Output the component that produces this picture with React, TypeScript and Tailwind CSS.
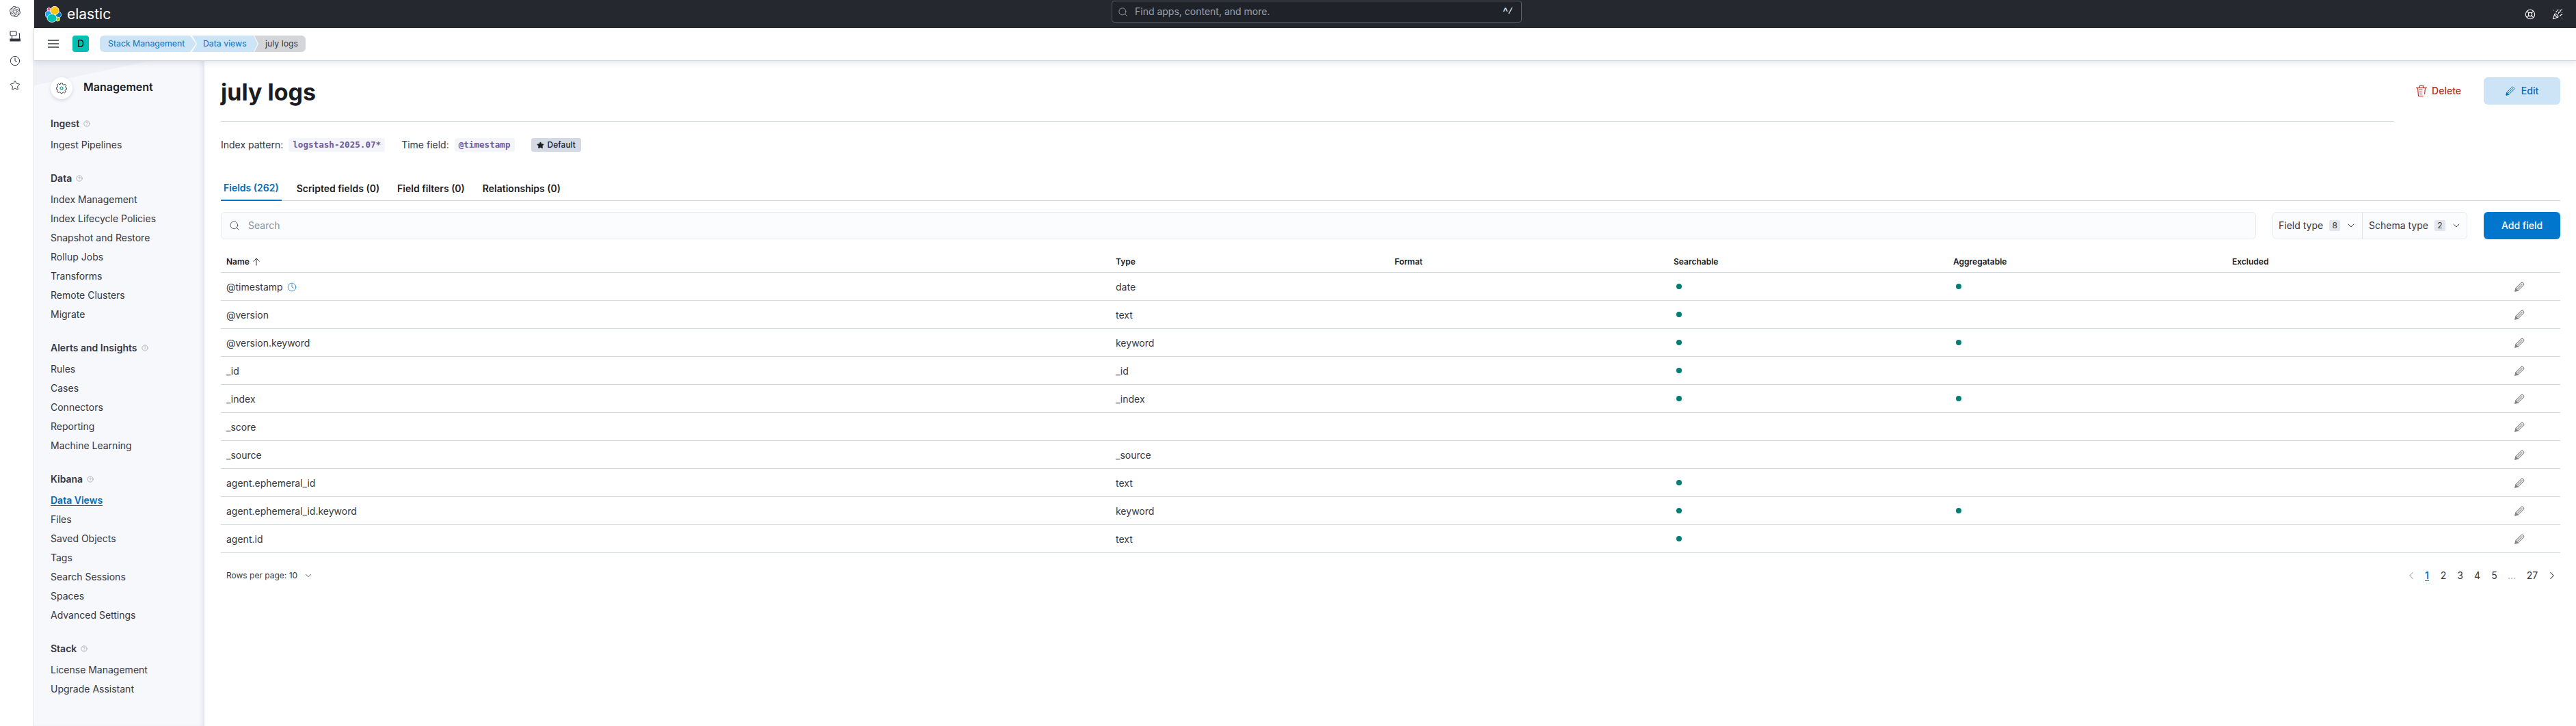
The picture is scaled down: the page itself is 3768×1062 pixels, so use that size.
import { ChevronDown, ChevronLeft, ChevronRight, CircleHelp, Clock, LifeBuoy, PartyPopper, Search, Star } from "lucide-react";
import { SiOpenai } from "react-icons/si";

const navSections = [
  { title: "Ingest", items: ["Ingest Pipelines"] },
  {
    title: "Data",
    items: ["Index Management", "Index Lifecycle Policies", "Snapshot and Restore", "Rollup Jobs", "Transforms", "Remote Clusters", "Migrate"],
  },
  { title: "Alerts and Insights", items: ["Rules", "Cases", "Connectors", "Reporting", "Machine Learning"] },
  { title: "Kibana", items: ["Data Views", "Files", "Saved Objects", "Tags", "Search Sessions", "Spaces", "Advanced Settings"] },
  { title: "Stack", items: ["License Management", "Upgrade Assistant"] },
];

const fields = [
  { name: "@timestamp", type: "date", searchable: true, aggregatable: true, timeField: true },
  { name: "@version", type: "text", searchable: true, aggregatable: false },
  { name: "@version.keyword", type: "keyword", searchable: true, aggregatable: true },
  { name: "_id", type: "_id", searchable: true, aggregatable: false },
  { name: "_index", type: "_index", searchable: true, aggregatable: true },
  { name: "_score", type: "", searchable: false, aggregatable: false },
  { name: "_source", type: "_source", searchable: false, aggregatable: false },
  { name: "agent.ephemeral_id", type: "text", searchable: true, aggregatable: false },
  { name: "agent.ephemeral_id.keyword", type: "keyword", searchable: true, aggregatable: true },
  { name: "agent.id", type: "text", searchable: true, aggregatable: false },
];

function PencilIcon({ className }: { className?: string }) {
  return (
    <svg viewBox="0 0 16 16" fill="none" stroke="currentColor" strokeWidth="1.1" className={className}>
      <path d="M1 15 L2 10.5 L10.8 1.7 a1.6 1.6 0 0 1 2.2 0 L14.3 3 a1.6 1.6 0 0 1 0 2.2 L5.5 14 Z" />
      <path d="M4.2 11.8 L12.2 3.8" />
      <path d="M1 15 L2 10.8 L5.2 14 Z" fill="currentColor" />
    </svg>
  );
}

function TrashIcon({ className }: { className?: string }) {
  return (
    <svg viewBox="0 0 16 16" fill="none" stroke="currentColor" strokeWidth="1.1" className={className}>
      <path d="M0 3.5 H16 M5.5 3.5 V0.5 H10.5 V3.5 M2.5 3.5 L3.5 15.5 H10.5 M13.5 3.5 L12.5 13 M4 6.5 H9.5 M4.5 9.5 H8.5 M5 12.5 H9" />
    </svg>
  );
}

function ElasticLogo() {
  return (
    <svg viewBox="0 0 24 24" className="h-6 w-6">
      <g stroke="#fff" strokeWidth="0.8">
        <circle cx="5.5" cy="5" r="2.6" fill="#f04e98" />
        <ellipse cx="5" cy="12" rx="5" ry="5.2" fill="#1ba9f5" />
        <ellipse cx="19.5" cy="12.5" rx="4" ry="4.5" fill="#0077cc" />
        <circle cx="18.5" cy="19" r="3" fill="#93c90e" />
        <circle cx="14" cy="6.5" r="6.2" fill="#fec514" />
        <ellipse cx="10" cy="17.5" rx="7" ry="6" fill="#00bfb3" />
      </g>
    </svg>
  );
}

function DeviceIcon() {
  return (
    <svg viewBox="0 0 16 16" fill="none" stroke="#343741" strokeWidth="1.2" className="h-4 w-4">
      <rect x="1" y="1" width="9" height="6" rx="1" />
      <path d="M3.5 7 V12.5 M13.5 4 H14.5 V12.5" />
      <path d="M1 12 H15.5 V15 H1 Z" fill="#343741" />
    </svg>
  );
}

function GearIcon() {
  return (
    <svg viewBox="0 0 16 16" fill="none" stroke="#343741" strokeWidth="0.9" className="h-4 w-4">
      <path d="M6.7 0.6 H9.3 L9.8 2.6 L11.5 3.3 L13.2 2.2 L14.9 4.2 L13.6 5.8 L14.2 7.3 L15.6 7.6 V9.6 L13.9 10 L13.2 11.6 L14.2 13.3 L12.4 15 L10.8 13.8 L9.4 14.3 L9 15.6 H7 L6.6 14.2 L5 13.6 L3.4 14.8 L1.6 13 L2.7 11.4 L2 9.8 L0.4 9.4 V7 L2.1 6.6 L2.8 5 L1.6 3.3 L3.4 1.6 L5 2.7 L6.4 2.2 Z" />
      <circle cx="8" cy="8" r="2" stroke="#00a69b" strokeWidth="1.2" />
    </svg>
  );
}

function Sidebar() {
  return (
    <aside className="relative w-[249px] shrink-0 overflow-hidden border-r border-[#e3e6ee] bg-[#f7f8fc] px-6 pt-6 shadow-[inset_-5px_0_6px_-3px_rgba(90,100,130,0.14)]">
      <div className="absolute left-0 top-0 h-[36px] w-[170px] bg-[#eff1f7] [clip-path:polygon(0_0,100%_0,0_100%)]" />
      <div className="relative flex items-center gap-4 pb-px">
        <div className="flex h-8 w-8 items-center justify-center rounded-full bg-white shadow-[0_2px_5px_rgba(60,70,100,0.18)]">
          <GearIcon />
        </div>
        <span className="pb-1 text-base font-semibold text-[#1a1c21]">Management</span>
      </div>
      {navSections.map((section) => (
        <div key={section.title} className="relative mt-[25px]">
          <div className="mb-[7px] flex h-5 items-center gap-[6px] text-sm font-semibold text-[#343741]">
            {section.title}
            <CircleHelp size={10} strokeWidth={1.4} className="text-[#7f8794]" />
          </div>
          {section.items.map((item) =>
            item === "Data Views" ? (
              <div key={item} className="flex h-7 items-center text-sm font-semibold text-[#006bb8] underline underline-offset-2">
                {item}
              </div>
            ) : (
              <div key={item} className="flex h-7 items-center text-sm text-[#343741]">
                {item}
              </div>
            ),
          )}
        </div>
      ))}
    </aside>
  );
}

function Code({ children }: { children: string }) {
  return (
    <span className="flex h-5 items-center rounded-[3px] bg-[#f3f5fb] px-[6px] font-['DejaVu_Sans_Mono',monospace] text-[12.6px] font-bold text-[#6f5a9e]">
      {children}
    </span>
  );
}

function FilterButton({ label, count, className }: { label: string; count: number; className: string }) {
  return (
    <div className={`flex items-center text-sm text-[#343741] ${className}`}>
      <span>{label}</span>
      <span className="ml-[9px] flex h-4 w-4 items-center justify-center rounded-[3px] bg-[#e0e5ee] text-xs">{count}</span>
      <ChevronDown size={16} strokeWidth={1.4} className="ml-2" />
    </div>
  );
}

function Dot() {
  return <span className="ml-3 block h-2 w-2 rounded-full bg-[#017d73]" />;
}

export default function App() {
  return (
    <div className="flex h-[1062px] w-full overflow-hidden bg-white font-['Inter',sans-serif]">
      {/* browser strip */}
      <div className="flex w-[50px] shrink-0 flex-col items-center gap-5 border-r border-[#e2e3e6] pr-[6px] pt-[9px] text-[#343741]">
        <SiOpenai size={16} className="text-[#55585f]" />
        <DeviceIcon />
        <Clock size={16} strokeWidth={1.5} />
        <Star size={16} strokeWidth={1.5} />
      </div>

      <div className="flex min-w-0 flex-1 flex-col">
        {/* top bar */}
        <header className="flex h-[41px] shrink-0 items-start bg-[#25282f]">
          <div className="flex h-full w-[1576px] shrink-0 items-center gap-2 pl-4">
            <ElasticLogo />
            <span className="text-[21px] font-normal leading-none text-white">elastic</span>
          </div>
          <div className="mt-px flex h-8 w-[600px] items-center rounded-[4px] border border-[#5a5d64] bg-[#1f2229] pl-2 pr-3 text-sm text-[#98a2b3]">
            <Search size={15} strokeWidth={1.3} className="text-[#aab2bf]" />
            <span className="ml-[10px] flex-1">Find apps, content, and more.</span>
            <span className="font-mono text-xs font-bold text-[#dfe5ef]">^/</span>
          </div>
          <div className="flex h-full flex-1 items-center justify-end gap-6 pr-[19px] text-white">
            <LifeBuoy size={16} strokeWidth={1.6} />
            <PartyPopper size={16} strokeWidth={1.6} />
          </div>
        </header>

        {/* breadcrumb bar */}
        <div className="relative z-10 flex h-[48px] shrink-0 items-center border-b border-[#d3dae6] bg-white pl-5 pb-px shadow-[0_3px_8px_rgba(90,100,130,0.16)]">
          <svg viewBox="0 0 16 12" fill="none" stroke="#343741" strokeWidth="1.4" className="h-3 w-4">
            <path d="M0 1 H16 M0 6 H16 M0 11 H16" />
          </svg>
          <div className="ml-5 flex h-6 w-6 items-center justify-center rounded-[4px] bg-[#00bfb3] text-sm text-black">D</div>
          <div className="ml-4 flex h-6 items-center text-[12.3px]">
            <div className="flex h-6 w-[141px] items-center rounded-l-md bg-[#cce4f5] pl-3 text-[#0b6fbd] [clip-path:polygon(0_0,calc(100%-9px)_0,100%_50%,calc(100%-9px)_100%,0_100%)]">
              Stack Management
            </div>
            <div className="-ml-[6px] flex h-6 w-[96px] items-center bg-[#cce4f5] pl-4 text-[#0b6fbd] [clip-path:polygon(0_0,calc(100%-6px)_0,100%_50%,calc(100%-6px)_100%,0_100%,7px_50%)]">
              Data views
            </div>
            <div className="-ml-[5px] flex h-6 w-[75px] items-center rounded-r-md bg-[#d4d5d8] pl-4 text-[#343741] [clip-path:polygon(0_0,100%_0,100%_100%,0_100%,6px_50%)]">
              july logs
            </div>
          </div>
        </div>

        <div className="flex min-h-0 flex-1">
          <Sidebar />

          <main className="min-w-0 flex-1 pl-6 pr-[23px] pt-6">
            {/* page header */}
            <div className="flex items-start">
              <div className="flex-1 border-b border-[#d3dae6] pb-5">
                <h1 className="text-[34px] font-bold leading-[44px] text-[#1a1c21]">july logs</h1>
              </div>
              <div className="ml-8 flex items-center gap-[33px]">
                <div className="flex h-10 items-center gap-[7px] text-sm font-medium text-[#bd271e]">
                  <TrashIcon className="h-4 w-4" />
                  Delete
                </div>
                <div className="flex h-10 w-[112px] items-center justify-center gap-[9px] rounded-md bg-[#cce4f5] text-sm font-medium text-[#006bb8]">
                  <PencilIcon className="h-[14px] w-[14px]" />
                  Edit
                </div>
              </div>
            </div>

            {/* meta row */}
            <div className="mt-6 flex items-center text-sm text-[#343741]">
              <span>Index pattern:</span>
              <span className="ml-2">
                <Code>logstash-2025.07*</Code>
              </span>
              <span className="ml-6">Time field:</span>
              <span className="ml-2">
                <Code>@timestamp</Code>
              </span>
              <span className="ml-6 flex h-5 items-center gap-[5px] rounded-[3px] bg-[#d3dae6] px-2 text-xs font-medium text-[#1a1c21]">
                <Star size={11} className="fill-[#1a1c21]" />
                Default
              </span>
            </div>

            {/* tabs */}
            <div className="mt-9 flex h-9 gap-[18px] border-b border-[#d3dae6] text-sm font-semibold text-[#1a1c21]">
              <div className="-mb-px flex items-center border-b-2 border-[#0077cc] px-1 text-[#006bb8]">Fields (262)</div>
              <div className="flex items-center px-1">Scripted fields (0)</div>
              <div className="flex items-center px-1">Field filters (0)</div>
              <div className="flex items-center px-1">Relationships (0)</div>
            </div>

            {/* search + filters */}
            <div className="mt-4 flex h-10 gap-6">
              <div className="flex flex-1 items-center rounded-md border border-[#e6e9f0] bg-[#fbfcfd] pl-[11px] text-sm text-[#8a909c]">
                <Search size={16} strokeWidth={1.2} className="text-[#343741]" />
                <span className="ml-3">Search</span>
              </div>
              <div className="flex w-[285px] rounded-md border border-[#e6e9f0] bg-[#fbfcfd]">
                <FilterButton label="Field type" count={8} className="w-[131px] border-r border-[#dfe3ee] pl-2" />
                <FilterButton label="Schema type" count={2} className="flex-1 pl-[9px]" />
              </div>
              <div className="flex w-[112px] items-center justify-center rounded-md bg-[#0077cc] text-sm font-medium text-white">Add field</div>
            </div>

            {/* table */}
            <div className="grid h-[49px] grid-cols-[1301px_408px_408px_409px_408px_1fr] items-end border-b border-[#d3dae6] pb-[7px] text-xs font-semibold leading-4 text-[#1a1c21]">
              <div className="flex items-center gap-1 pl-2">
                Name
                <svg viewBox="0 0 12 12" fill="none" stroke="#343741" className="h-3 w-3">
                  <path d="M6 11.5 V1 M1.5 5.5 L6 1 L10.5 5.5" />
                </svg>
              </div>
              <div className="pl-2">Type</div>
              <div className="pl-2">Format</div>
              <div className="pl-2">Searchable</div>
              <div className="pl-2">Aggregatable</div>
              <div className="pl-2">Excluded</div>
            </div>
            {fields.map((field) => (
              <div
                key={field.name}
                className="grid h-[41px] grid-cols-[1301px_408px_408px_409px_408px_1fr_81px] items-center border-b border-[#d3dae6] text-sm text-[#343741]"
              >
                <div className="flex items-center gap-[6px] pl-2 pt-px">
                  {field.name}
                  {field.timeField && <Clock size={14} strokeWidth={1.3} className="text-[#0077cc]" />}
                </div>
                <div className="pl-2 pt-px">{field.type}</div>
                <div />
                <div>{field.searchable && <Dot />}</div>
                <div>{field.aggregatable && <Dot />}</div>
                <div />
                <div className="flex justify-end pr-[52px]">
                  <PencilIcon className="h-[15px] w-[15px] text-[#808184]" />
                </div>
              </div>
            ))}

            {/* footer */}
            <div className="mt-[23px] flex h-5 items-center justify-between">
              <div className="flex items-center gap-[9px] pl-2 text-xs text-[#343741]">
                Rows per page: 10
                <ChevronDown size={14} strokeWidth={1.4} />
              </div>
              <div className="flex items-center text-sm text-[#343741]">
                <div className="flex w-[22px] justify-center text-[#98a2b3]">
                  <ChevronLeft size={18} strokeWidth={1.4} />
                </div>
                <div className="w-6 text-center font-semibold text-[#0077cc] underline underline-offset-2">1</div>
                <div className="w-6 text-center">2</div>
                <div className="w-[25px] text-center">3</div>
                <div className="w-[25px] text-center">4</div>
                <div className="w-[25px] text-center">5</div>
                <div className="w-[26px] text-center text-[#98a2b3]">…</div>
                <div className="w-[34px] text-center">27</div>
                <div className="flex w-6 justify-center">
                  <ChevronRight size={18} strokeWidth={1.4} />
                </div>
              </div>
            </div>
          </main>
        </div>
      </div>
    </div>
  );
}
